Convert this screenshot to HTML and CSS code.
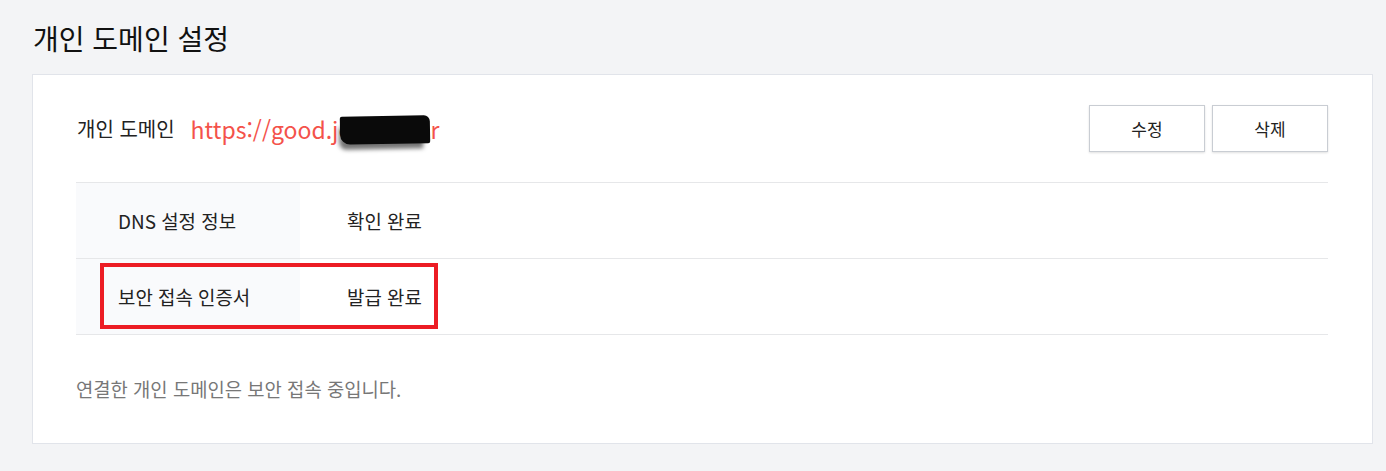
FILE: index.html
```html
<!DOCTYPE html>
<html lang="ko">
<head>
<meta charset="utf-8">
<title>개인 도메인 설정</title>
<link rel="stylesheet" href="styles.css">
</head>
<body>
<main class="page">
  <h1 class="page-title">개인 도메인 설정</h1>
  <section class="card">
    <div class="domain-head">
      <div class="domain-info">
        <span class="domain-label">개인 도메인</span>
        <span class="domain-url">https://good.jo<span class="redact" aria-hidden="true"></span>r</span>
      </div>
      <div class="actions">
        <button class="btn" type="button">수정</button>
        <button class="btn" type="button">삭제</button>
      </div>
    </div>
    <div class="info-table">
      <div class="info-row">
        <div class="info-key">DNS 설정 정보</div>
        <div class="info-val">확인 완료</div>
      </div>
      <div class="info-row">
        <div class="info-key">보안 접속 인증서</div>
        <div class="info-val">발급 완료</div>
      </div>
      <div class="highlight"></div>
    </div>
    <p class="note">연결한 개인 도메인은 보안 접속 중입니다.</p>
  </section>
</main>
</body>
</html>
```
FILE: styles.css
```css
* { box-sizing: border-box; }
html, body { margin: 0; padding: 0; }
body {
  background: #f3f4f6;
  font-family: "Noto Sans CJK KR", "Noto Sans", sans-serif;
  color: #222;
  width: 1386px;
  height: 471px;
  overflow: hidden;
}
.page {
  padding: 17px 13px 0 32px;
}
.page-title {
  margin: 0 0 15px 1px;
  font-size: 28px;
  font-weight: 400;
  line-height: 42px;
  color: #111;
}
.card {
  background: #fff;
  border: 1px solid #e1e4ea;
  width: 1341px;
  height: 370px;
  padding: 30px 44px 0 43px;
}
.domain-head {
  display: flex;
  align-items: center;
  justify-content: space-between;
  height: 47px;
}
.domain-info {
  display: flex;
  align-items: center;
  gap: 16px;
}
.domain-label {
  font-size: 20px;
  color: #222;
  margin-left: 1px;
}
.domain-url {
  font-size: 23px;
  color: #f4524a;
  white-space: nowrap;
}
.redact {
  display: inline-block;
  width: 90px;
  height: 28px;
  background: #0a0a0a;
  vertical-align: middle;
  border-radius: 2px 6px 2px 10px;
  transform: rotate(-1deg);
  margin: -4px 0 0 -12px;
  box-shadow: -4px 8px 4px -3px rgba(0,0,0,0.55);
}
.actions {
  display: flex;
  gap: 7px;
}
.btn {
  width: 116px;
  height: 47px;
  background: #fff;
  border: 1px solid #c9cdd3;
  box-shadow: 0 1px 2px rgba(0,0,0,0.12);
  font-family: inherit;
  font-size: 17px;
  color: #222;
  padding: 0;
}
.info-table {
  position: relative;
  margin-top: 30px;
  border-top: 1px solid #e6e7e9;
}
.info-row {
  display: flex;
  height: 76px;
  border-bottom: 1px solid #e6e7e9;
}
.info-key {
  width: 224px;
  background: #f9fafc;
  display: flex;
  align-items: center;
  padding-left: 42px;
  font-size: 18.9px;
  color: #222;
}
.info-val {
  display: flex;
  align-items: center;
  padding-left: 47px;
  font-size: 18.9px;
  color: #222;
}
.highlight {
  position: absolute;
  left: 24px;
  top: 80px;
  width: 338px;
  height: 66px;
  border: 4px solid #ec1c24;
  pointer-events: none;
}
.note {
  margin: 41px 0 0 0;
  font-size: 18.8px;
  line-height: 26px;
  color: #777;
}
```
